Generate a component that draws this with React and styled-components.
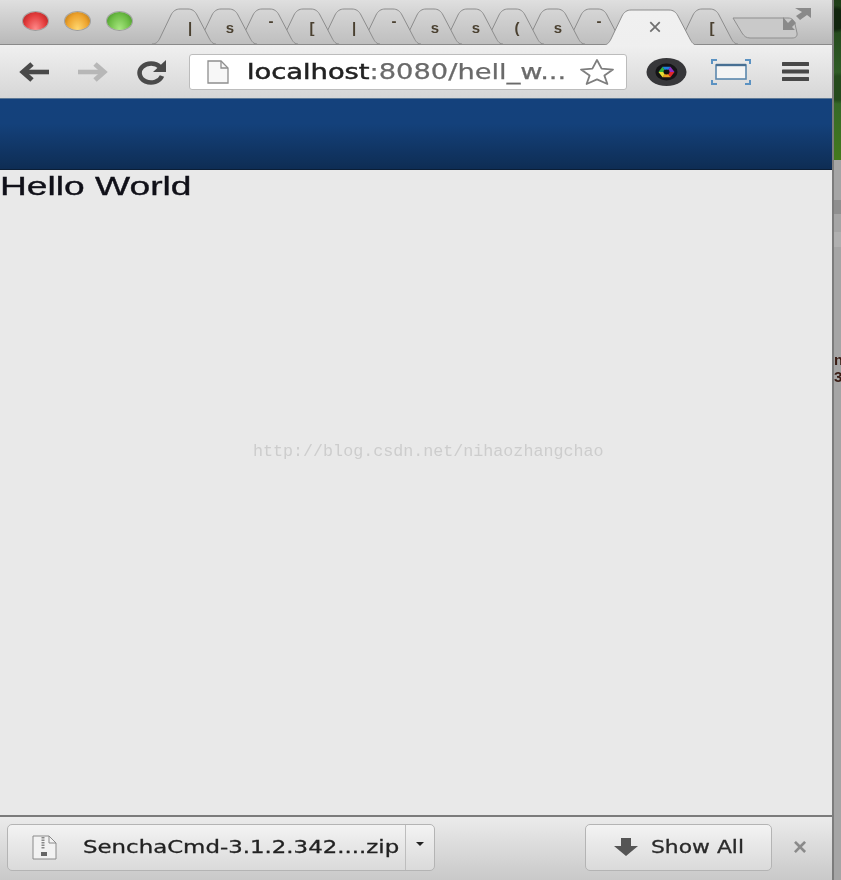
import React from "react";
import styled, { createGlobalStyle } from "styled-components";

const Global = createGlobalStyle`
  html, body { margin: 0; padding: 0; background: #a3a3a3; }
  #root { width: 841px; height: 880px; overflow: hidden; }
`;
const Page = styled.div`
  display: flex;
  width: 841px;
  height: 880px;
  overflow: hidden;
  font-family: "Liberation Sans", Arial, sans-serif;
`;
const Window = styled.div`
  display: flex;
  flex-direction: column;
  width: 832px;
  height: 880px;
  flex: none;
  filter: blur(0.45px);
`;
const TitleBar = styled.div`
  position: relative;
  display: flex;
  align-items: flex-end;
  height: 45px;
  box-sizing: border-box;
  padding-left: 23px;
  background: linear-gradient(#dfdfdf, #b9b9b9);
  border-bottom: 1px solid #8a8a8a;
`;
const Lights = styled.div`
  display: flex;
  gap: 17px;
  align-self: flex-start;
  margin-top: 12px;
  width: 129px;
  flex: none;
`;
const Light = styled.span`
  width: 25px;
  height: 18px;
  border-radius: 50%;
  box-shadow: 0 0 0 1px rgba(80, 80, 80, 0.35);
  background: radial-gradient(ellipse at 50% 95%, ${(p) => p.$glow} 0%, ${(p) => p.$base} 60%, ${(p) => p.$edge} 100%);
`;
const Tabs = styled.div`
  display: flex;
  align-items: flex-end;
  height: 36px;
`;
const TabShell = styled.div`
  position: relative;
  flex: none;
  width: ${(p) => p.$w}px;
  height: 36px;
  margin-right: -23px;
  margin-bottom: ${(p) => (p.$active ? -1 : 0)}px;
  z-index: ${(p) => p.$z};
  svg { position: absolute; inset: 0; display: block; }
`;
const TabLabel = styled.span`
  position: absolute;
  left: ${(p) => p.$x}px;
  top: ${(p) => p.$y}px;
  width: 12px;
  text-align: center;
  font-size: ${(p) => (p.$active ? 24 : 15)}px;
  font-weight: ${(p) => (p.$active ? "normal" : "bold")};
  line-height: 18px;
  color: ${(p) => (p.$active ? "#707070" : "#4a4030")};
`;
const NewTab = styled.svg`
  flex: none;
  display: block;
  margin-left: 17px;
  margin-bottom: 4px;
`;
const Resize = styled.svg`
  position: absolute;
  left: 781px;
  top: 6px;
`;
const ToolBar = styled.div`
  display: flex;
  align-items: center;
  height: 53px;
  flex: none;
  box-sizing: border-box;
  padding-left: 19px;
  background: linear-gradient(#f0f0f0, #d6d6d6);
`;
const NavIcon = styled.svg`
  flex: none;
  display: block;
  margin-right: ${(p) => p.$gap}px;
`;
const UrlBox = styled.div`
  display: flex;
  align-items: center;
  width: 438px;
  height: 36px;
  flex: none;
  box-sizing: border-box;
  padding-left: 17px;
  margin-right: 19px;
  background: #fff;
  border: 1px solid #bcbcbc;
  border-radius: 3px;
  overflow: hidden;
`;
const UrlText = styled.span`
  display: inline-block;
  flex: none;
  width: 333px;
  margin-left: 18px;
  font-family: "DejaVu Sans", sans-serif;
  font-size: 21px;
  white-space: nowrap;
  color: #6a6a6a;
  -webkit-text-stroke: 0.25px #6a6a6a;
  transform: scaleX(1.3);
  transform-origin: left center;
  b { font-weight: normal; color: #222; -webkit-text-stroke: 0.5px #222; }
`;
const Star = styled.svg`
  flex: none;
  margin-left: -2px;
  position: relative;
`;
const Banner = styled.div`
  height: 72px;
  flex: none;
  background: linear-gradient(#14417c 0%, #14417b 35%, #0e2d54 100%);
  border-top: 1px solid #5c7896;
  border-bottom: 1px solid #0b1e36;
  box-sizing: border-box;
`;
const Content = styled.main`
  position: relative;
  flex: 1;
  background: #e9e9e9;
`;
const Hello = styled.div`
  display: inline-block;
  font-size: 26px;
  line-height: 32px;
  color: #101018;
  white-space: nowrap;
  -webkit-text-stroke: 0.35px #101018;
  transform: scaleX(1.43);
  transform-origin: left center;
`;
const Watermark = styled.div`
  position: absolute;
  left: 253px;
  top: 272px;
  font-family: "Liberation Mono", monospace;
  font-size: 16.7px;
  line-height: 20px;
  white-space: nowrap;
  color: #cdcdcd;
`;
const DownloadBar = styled.footer`
  display: flex;
  align-items: center;
  height: 65px;
  flex: none;
  box-sizing: border-box;
  padding: 0 0 3px 7px;
  border-top: 2px solid #7b7b7b;
  background: linear-gradient(#ebebeb, #c9c9c9);
`;
const Chip = styled.div`
  display: flex;
  align-items: center;
  height: 47px;
  flex: none;
  box-sizing: border-box;
  border: 1px solid #b4b4b4;
  border-radius: 5px;
  background: linear-gradient(#f3f3f3, #dadada);
`;
const FileChip = styled(Chip)`
  width: 428px;
  padding-left: 24px;
  margin-right: 150px;
`;
const FileName = styled.span`
  display: inline-block;
  flex: none;
  width: 322px;
  margin-left: 26px;
  font-family: "DejaVu Sans", sans-serif;
  font-size: 17px;
  white-space: nowrap;
  color: #222;
  -webkit-text-stroke: 0.3px #222;
  transform: scaleX(1.345);
  transform-origin: left center;
`;
const Divider = styled.span`
  width: 1px;
  height: 100%;
  flex: none;
  background: #bdbdbd;
`;
const Caret = styled.span`
  margin-left: 10px;
  margin-top: -6px;
  width: 0;
  height: 0;
  border-left: 4px solid transparent;
  border-right: 4px solid transparent;
  border-top: 4px solid #222;
`;
const ShowAll = styled(Chip)`
  width: 187px;
  padding-left: 28px;
  margin-right: 21px;
`;
const ShowLabel = styled.span`
  display: inline-block;
  flex: none;
  margin-left: 13px;
  font-family: "DejaVu Sans", sans-serif;
  font-size: 17px;
  white-space: nowrap;
  color: #2a2a2a;
  -webkit-text-stroke: 0.3px #2a2a2a;
  transform: scaleX(1.285);
  transform-origin: left center;
`;
const Dismiss = styled.span`
  font-size: 24px;
  line-height: 1;
  font-weight: bold;
  color: #8a8a8a;
`;
const Behind = styled.aside`
  display: flex;
  flex-direction: column;
  flex: 1;
  overflow: hidden;
  background: #a5a5a5;
  border-left: 2px solid #7c7c7c;
  filter: blur(0.5px);
`;
const Leaves = styled.div`
  height: 160px;
  flex: none;
  margin-left: -2px;
  background:
    radial-gradient(circle at 40% 12%, #12250f 0 10px, transparent 14px),
    radial-gradient(circle at 70% 55%, #254a1c 0 12px, transparent 16px),
    linear-gradient(#1f3d18, #34662a 60%, #447a1c);
`;
const Scrap = styled.div`
  height: ${(p) => p.$h}px;
  margin-top: ${(p) => p.$top}px;
  flex: none;
  background: ${(p) => p.$bg};
`;
const ScrapText = styled.div`
  margin-top: ${(p) => p.$top}px;
  font-size: 15px;
  line-height: 15px;
  font-weight: bold;
  color: #3a1c14;
`;

function tabPath(w) {
  const r = w - 64;
  return `M0,36 C4,36 6,34 8,30 L19,7 C21,3 24,1 28,1 L${36 + r},1 C${40 + r},1 ${43 + r},3 ${45 + r},7 L${57 + r},30 C${59 + r},34 ${61 + r},36 ${w},36`;
}

function Tab({ w = 64, label, x = 31, y = 11, z, active }) {
  const id = `tab-fill-${z}`;
  return (
    <TabShell $w={w} $z={z} $active={active}>
      <svg width={w} height="36" viewBox={`0 0 ${w} 36`}>
        <defs>
          <linearGradient id={id} x1="0" y1="0" x2="0" y2="1">
            <stop offset="0" stopColor={active ? "#f0f0f0" : "#d6d6d6"} />
            <stop offset="1" stopColor={active ? "#efefef" : "#bfbfbf"} />
          </linearGradient>
        </defs>
        <path d={tabPath(w)} fill={`url(#${id})`} stroke="#8d8d8d" strokeWidth="1" />
      </svg>
      <TabLabel $x={x} $y={y} $active={active}>{label}</TabLabel>
    </TabShell>
  );
}

const tabs = [
  { label: "|", x: 32 }, { label: "s" }, { label: "-", y: 4 }, { label: "[" }, { label: "|", x: 32 },
  { label: "-", y: 4 }, { label: "s" }, { label: "s" }, { label: "(" }, { label: "s" },
  { label: "-", y: 4 },
  { label: "×", w: 94, x: 45, y: 9, active: true },
  { label: "[", x: 32 },
];

const sectors = ["#e0282a", "#f0a020", "#e8e030", "#30b040", "#2080e0", "#9030c0"];
function sector(i) {
  const a = (i * Math.PI) / 3;
  const b = ((i + 1) * Math.PI) / 3;
  const rx = 8, ry = 6;
  return `M0,0 L${rx * Math.cos(a)},${ry * Math.sin(a)} L${rx * Math.cos(b)},${ry * Math.sin(b)} Z`;
}

export default function App() {
  return (
    <Page>
      <Global />
      <Window>
        <TitleBar>
          <Lights>
            <Light $glow="#ff8a8a" $base="#e23a3a" $edge="#9c2020" />
            <Light $glow="#ffd870" $base="#eda22c" $edge="#a86c14" />
            <Light $glow="#a8e880" $base="#6cbc44" $edge="#3e8624" />
          </Lights>
          <Tabs>
            {tabs.map((t, i) => (
              <Tab key={i} {...t} z={t.active ? 50 : 30 - i} />
            ))}
          </Tabs>
          <NewTab width="68" height="24" viewBox="0 0 68 24">
            <path d="M1,2 L56,2 C60,2 62,4 63,8 L65,17 C65.5,20 64,22 60,22 L18,22 C14,22 12,20 10,17 Z" fill="#c9c9c9" stroke="#8f8f8f" />
          </NewTab>
          <Resize width="32" height="26" viewBox="0 0 32 26">
            <path d="M14,2 L30,2 L30,12 L26,9 L19,14 L15,10 L21,6 Z" fill="#8a8a8a" />
            <path d="M2,11 L2,24 L14,24 L11,21 L15,17 L11,13 L7,17 Z" fill="#8a8a8a" />
          </Resize>
        </TitleBar>
        <ToolBar>
          <NavIcon $gap={27} width="31" height="24" viewBox="0 0 31 24">
            <path d="M13,4 L4,12 L13,20" fill="none" stroke="#4a4a4a" strokeWidth="5" />
            <path d="M5,12 H30" stroke="#4a4a4a" strokeWidth="4.6" />
          </NavIcon>
          <NavIcon $gap={28} width="31" height="24" viewBox="0 0 31 24">
            <path d="M18,4 L27,12 L18,20" fill="none" stroke="#b7b7b7" strokeWidth="5" />
            <path d="M26,12 H1" stroke="#b7b7b7" strokeWidth="4.6" />
          </NavIcon>
          <NavIcon $gap={22} width="31" height="26" viewBox="0 0 31 26">
            <path d="M24,8 A11.5,9.5 0 1 0 26,17" fill="none" stroke="#4a4a4a" strokeWidth="4.6" />
            <path d="M30,1 L30,13 L17,13 Z" fill="#4a4a4a" />
          </NavIcon>
          <UrlBox>
            <svg width="22" height="24" viewBox="0 0 22 24" style={{ flex: "none" }}>
              <path d="M1,1 L14,1 L21,8 L21,23 L1,23 Z" fill="#f7f7f7" stroke="#8e8e8e" strokeWidth="1.3" />
              <path d="M14,1 L14,8 L21,8" fill="none" stroke="#8e8e8e" strokeWidth="1.3" />
            </svg>
            <UrlText><b>localhost</b>:8080/hell_w...</UrlText>
            <Star width="38" height="28" viewBox="0 0 38 28">
              <path d="M19,2 L23.6,10.6 L35,11.6 L26.4,17.6 L29.4,26 L19,21.4 L8.6,26 L11.6,17.6 L3,11.6 L14.4,10.6 Z" fill="#fff" stroke="#7e7e7e" strokeWidth="1.8" strokeLinejoin="round" />
            </Star>
          </UrlBox>
          <NavIcon $gap={24} width="41" height="28" viewBox="-20.5 -14 41 28">
            <ellipse cx="0" cy="0" rx="20" ry="14" fill="#37373a" />
            <ellipse cx="0" cy="0" rx="11" ry="8.5" fill="#141416" />
            {sectors.map((c, i) => <path key={c} d={sector(i)} fill={c} />)}
            <ellipse cx="0" cy="0" rx="3" ry="2.4" fill="#111" />
          </NavIcon>
          <NavIcon $gap={31} width="40" height="26" viewBox="0 0 40 26">
            <rect x="5" y="6" width="30" height="14" fill="#f4f4f4" stroke="#5b87ad" strokeWidth="1.6" />
            <path d="M5,6 H35" stroke="#476f93" strokeWidth="2.4" />
            <path d="M1,5 V1 H6 M34,1 H39 V5 M1,21 V25 H6 M34,25 H39 V21" fill="none" stroke="#5b92c2" strokeWidth="2" />
          </NavIcon>
          <NavIcon $gap={0} width="27" height="21" viewBox="0 0 27 21">
            <path d="M1,3 H26 M1,10.5 H26 M1,18 H26" stroke="#484848" strokeWidth="4" strokeLinecap="round" />
          </NavIcon>
        </ToolBar>
        <Banner />
        <Content>
          <Hello>Hello World</Hello>
          <Watermark>http://blog.csdn.net/nihaozhangchao</Watermark>
        </Content>
        <DownloadBar>
          <FileChip>
            <svg width="25" height="25" viewBox="0 0 25 25" style={{ flex: "none" }}>
              <path d="M1,1 L17,1 L24,8 L24,24 L1,24 Z" fill="#f2f2f2" stroke="#8a8a8a" />
              <path d="M17,1 L17,8 L24,8" fill="none" stroke="#8a8a8a" />
              <path d="M11,2 V14" stroke="#888" strokeWidth="3" strokeDasharray="1.5 1" />
              <rect x="9" y="17" width="6" height="4" fill="#666" />
            </svg>
            <FileName>SenchaCmd-3.1.2.342....zip</FileName>
            <Divider />
            <Caret />
          </FileChip>
          <ShowAll>
            <svg width="24" height="20" viewBox="0 0 24 20" style={{ flex: "none" }}>
              <path d="M7,1 H17 V9 H24 L12,19 L0,9 H7 Z" fill="#555" />
            </svg>
            <ShowLabel>Show All</ShowLabel>
          </ShowAll>
          <Dismiss>×</Dismiss>
        </DownloadBar>
      </Window>
      <Behind>
        <Leaves />
        <Scrap $top={40} $h={14} $bg="#8f8f8f" />
        <Scrap $top={18} $h={15} $bg="#b0b0b0" />
        <ScrapText $top={105}>n</ScrapText>
        <ScrapText $top={2}>3</ScrapText>
      </Behind>
    </Page>
  );
}
